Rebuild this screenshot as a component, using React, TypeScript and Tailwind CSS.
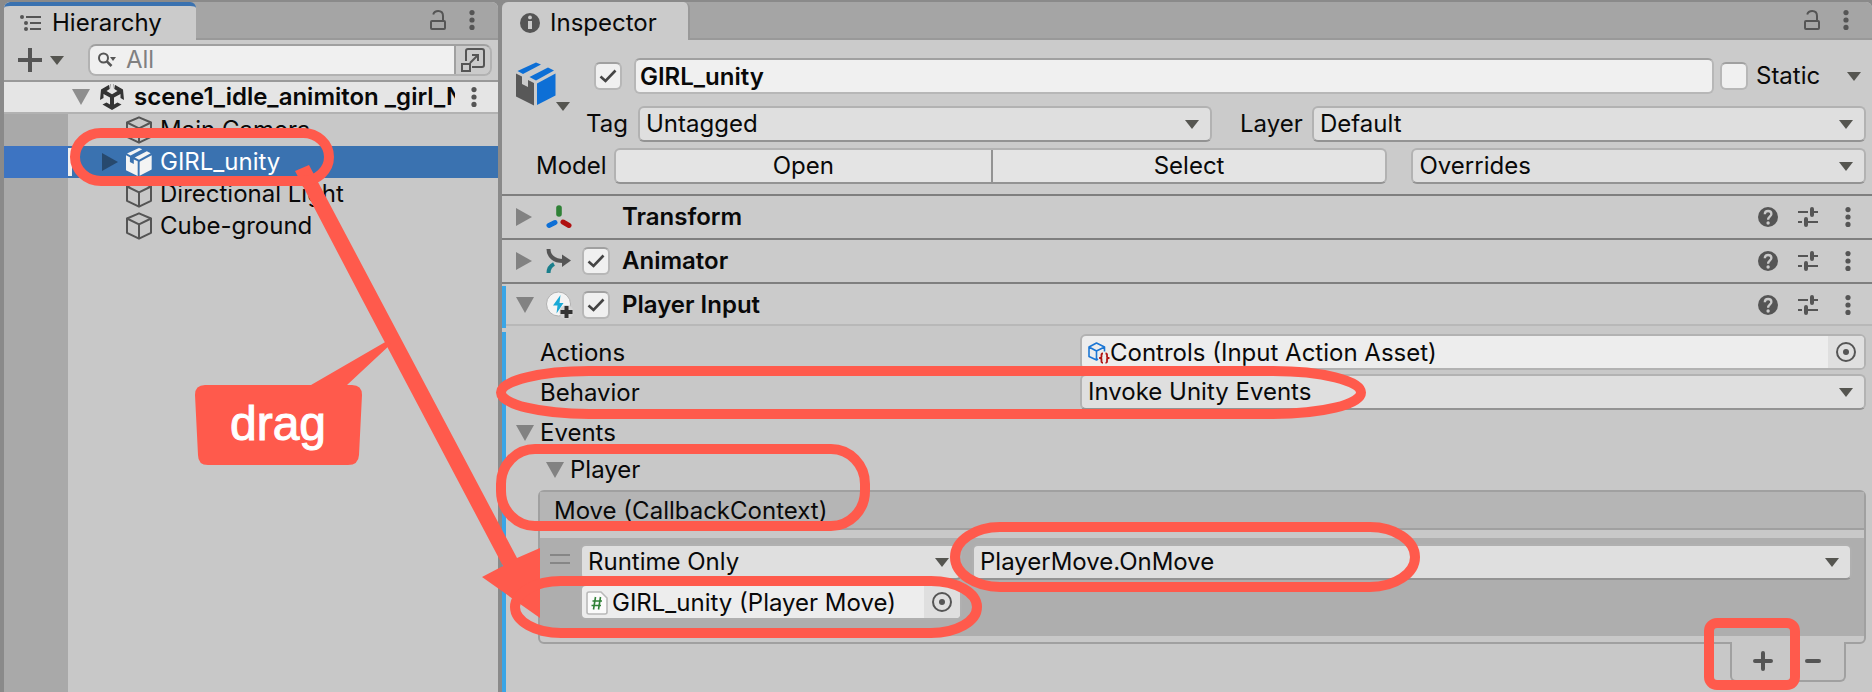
import { useState, type ReactNode } from "react";

/* ---------- small glyphs ---------- */

function DownArrow({ className = "" }: { className?: string }) {
  return (
    <svg width="14" height="9" viewBox="0 0 14 9" aria-hidden="true" className={`shrink-0 ${className}`}>
      <path d="M0 0H14L7 9Z" fill="#555550" />
    </svg>
  );
}

function Foldout({ open, fill = "#828282" }: { open: boolean; fill?: string }) {
  return (
    <svg width="18" height="18" viewBox="0 0 18 18" aria-hidden="true" className="shrink-0">
      <path d={open ? "M0 1H18L9 17Z" : "M0 0L16 9L0 18Z"} fill={fill} />
    </svg>
  );
}

function Dots() {
  return (
    <svg width="6" height="20" viewBox="0 0 6 20" aria-hidden="true" fill="#555555">
      <circle cx="3" cy="2.6" r="2.6" />
      <circle cx="3" cy="10" r="2.6" />
      <circle cx="3" cy="17.4" r="2.6" />
    </svg>
  );
}

function LockIcon() {
  return (
    <svg width="18" height="22" viewBox="0 0 18 22" aria-hidden="true" fill="none" stroke="#555555" strokeWidth="2">
      <rect x="2" y="12" width="14" height="8" rx="1" />
      <path d="M4.2 5.5C5 3 7 2 9.2 2C12.2 2 14 4 14 7V12" />
    </svg>
  );
}

function HierarchyIcon() {
  return (
    <svg width="22" height="18" viewBox="0 0 22 18" aria-hidden="true" stroke="#555555" strokeWidth="2" fill="#555555">
      <path d="M6 3H21M10 9H21M10 15H21" />
      <g stroke="none">
        <circle cx="2" cy="3" r="2" />
        <circle cx="6" cy="9" r="2" />
        <circle cx="6" cy="15" r="2" />
      </g>
    </svg>
  );
}

function InfoIcon() {
  return (
    <svg width="20" height="20" viewBox="0 0 20 20" aria-hidden="true">
      <circle cx="10" cy="10" r="10" fill="#555555" />
      <circle cx="10" cy="4.4" r="1.9" fill="#cbcbcb" />
      <path d="M8 8H12V16H8Z" fill="#cbcbcb" />
    </svg>
  );
}

function HelpIcon() {
  return (
    <svg width="20" height="20" viewBox="0 0 20 20" aria-hidden="true">
      <circle cx="10" cy="10" r="10" fill="#555555" />
      <path d="M6.8 7.3C6.8 5.2 8.1 4 10.1 4C12.1 4 13.4 5.2 13.4 6.9C13.4 9.3 10.1 9.4 10.1 12.8" fill="none" stroke="#cbcbcb" strokeWidth="2.3" />
      <circle cx="10.1" cy="16" r="1.7" fill="#cbcbcb" />
    </svg>
  );
}

function SlidersIcon() {
  return (
    <svg width="20" height="20" viewBox="0 0 20 20" aria-hidden="true" stroke="#555555" fill="none">
      <path d="M0 5H10M14 5H20M0 15H4M9 15H20" strokeWidth="2" />
      <path d="M14 2V8M8 12V18" strokeWidth="4" strokeLinecap="round" />
    </svg>
  );
}

function SearchIcon() {
  return (
    <svg width="18" height="16" viewBox="0 0 18 16" aria-hidden="true">
      <circle cx="5.5" cy="6" r="4.5" fill="none" stroke="#555555" strokeWidth="2" />
      <path d="M8.8 9.3L13.5 14" stroke="#555555" strokeWidth="2.6" />
      <path d="M12 5H18L15 9Z" fill="#555555" />
    </svg>
  );
}

function PopOutIcon() {
  return (
    <svg width="24" height="24" viewBox="0 0 24 24" aria-hidden="true" fill="none" stroke="#555555" strokeWidth="2">
      <path d="M5 13V3C5 1.8 5.8 1 7 1H21C22.2 1 23 1.8 23 3V17C23 18.2 22.2 19 21 19H11" />
      <rect x="1" y="16" width="8" height="7" />
      <path d="M9 15L17 7M11 7H17V13" />
    </svg>
  );
}

function CubeOutline() {
  return (
    <svg width="26" height="28" viewBox="0 0 26 28" aria-hidden="true" fill="none" stroke="#555555" strokeWidth="2" strokeLinejoin="round">
      <path d="M13 1.3L25 6.5V20.8L13 26.7L1 20.8V6.5Z" />
      <path d="M1 6.5L13 12.3L25 6.5M13 12.3V26.7" />
    </svg>
  );
}

function PrefabIcon({ front, side, size }: { front: string; side: string; size: "small" | "large" }) {
  return (
    <svg width={size === "large" ? 40 : 26} height={size === "large" ? 44 : 28} viewBox="0 0 40 43" aria-hidden="true">
      <path d="M20 0L25 2L7 11.5L1.5 8.5Z" fill={side} />
      <path d="M32 5L38 8L20 18L13.5 14.5Z" fill={side} />
      <path d="M0 11L6 14V21.5L12 24.5V17.5L18 20.5V43L0 34Z" fill={front} />
      <path d="M21 21L39.5 11V33L21 42.5Z" fill={side} />
    </svg>
  );
}

function UnityLogo() {
  return (
    <svg width="24" height="26" viewBox="0 0 24 26" aria-hidden="true" fill="#333333">
      <path d="M10.500 0V4.500L6.500 7L12 10.200L17.500 7L13.500 4.500V0L23 5.500L24 16L20.500 14V10L14 13.500V20.500L17.500 18.500L21.500 20.500L12 26L2.500 20.500L6.500 18.500L10 20.500V13.500L3.500 10V14L0 16L1 5.500Z" />
      <path d="M9.500 0L10.500 6M14.500 0L13.500 6" stroke="#e5e5e5" strokeWidth="1.200" />
    </svg>
  );
}

function TransformIcon() {
  return (
    <svg width="26" height="24" viewBox="0 0 26 24" aria-hidden="true" strokeLinecap="round">
      <path d="M13 3V9" stroke="#2f8136" strokeWidth="5.6" />
      <path d="M9 17.5L3 20.5" stroke="#0d6fd6" strokeWidth="5" />
      <path d="M17 17L23 20.5" stroke="#b01010" strokeWidth="5" />
    </svg>
  );
}

function AnimatorIcon() {
  return (
    <svg width="26" height="26" viewBox="0 0 26 26" aria-hidden="true" fill="none" strokeWidth="4">
      <path d="M2.5 1C2.5 8 8 13 17 13" stroke="#555555" />
      <path d="M16 6.5L25 12.5L16 19Z" fill="#555555" />
      <path d="M2.5 25C2.5 21 4 18 8 16" stroke="#1a7f8c" />
    </svg>
  );
}

function PlayerInputIcon() {
  return (
    <svg width="28" height="28" viewBox="0 0 28 28" aria-hidden="true">
      <circle cx="12.5" cy="13" r="12" fill="#f4f4f4" stroke="#b0b0b0" strokeWidth="1" />
      <path d="M14.5 4L7 14.5H11.5L10.5 22.5L17.5 12H13.5Z" fill="#19a9d6" />
      <circle cx="20.5" cy="21" r="7" fill="#d4d4d4" />
      <path d="M20.5 15V27M14.5 21H26.5" stroke="#333333" strokeWidth="4" />
    </svg>
  );
}

function ActionAssetIcon() {
  return (
    <svg width="22" height="22" viewBox="0 0 22 22" aria-hidden="true" fill="none" strokeLinejoin="round">
      <path d="M10 17L8.5 18L1 14.5V5L8.5 1L16.5 5V9.5M1 5L8.5 9L16.5 5M8.5 9V18" stroke="#1b76d4" strokeWidth="1.6" />
      <path d="M15 11.5C13 11.5 13.5 13 13.5 14.5C13.5 15.5 13 16 11.8 16C13 16 13.5 16.5 13.5 17.5C13.5 19.5 13 20.8 15 20.8M17.5 11.5C19.5 11.5 19 13 19 14.5C19 15.5 19.5 16 20.8 16C19.5 16 19 16.5 19 17.5C19 19.5 19.5 20.8 17.5 20.8" stroke="#b01515" strokeWidth="1.8" />
    </svg>
  );
}

function ScriptIcon() {
  return (
    <svg width="22" height="24" viewBox="0 0 22 24" aria-hidden="true">
      <path d="M3 1H15L21 7V21C21 22.2 20.2 23 19 23H3C1.8 23 1 22.2 1 21V3C1 1.8 1.8 1 3 1Z" fill="#fbfbfb" stroke="#b9b9b9" strokeWidth="1.6" />
      <path d="M9.5 6L7.5 18.5M14.5 6L12.5 18.5M6.5 10H16M5.5 14.5H15" stroke="#2f8136" strokeWidth="1.6" fill="none" />
    </svg>
  );
}

function PickerIcon() {
  return (
    <svg width="20" height="20" viewBox="0 0 20 20" aria-hidden="true">
      <circle cx="10" cy="10" r="9" fill="none" stroke="#555555" strokeWidth="2" />
      <circle cx="10" cy="10" r="3" fill="#555555" />
    </svg>
  );
}

/* ---------- controls ---------- */

function Dropdown({ label, value, inset = false, className = "" }: { label: string; value: string; inset?: boolean; className?: string }) {
  return (
    <span className={`grid min-w-0 grid-cols-1 items-center ${className}`}>
      <select
        aria-label={label}
        className={`col-start-1 row-start-1 h-9 w-full appearance-none rounded-md border-2 bg-[#dfdfdf] pl-1.5 pr-10 ${
          inset ? "border-[#b0b0b0] border-b-[#939393]" : "border-[#b2b2b2] border-b-[#939393]"
        }`}
      >
        <option>{value}</option>
      </select>
      <DownArrow className="pointer-events-none col-start-1 row-start-1 mr-[13px] justify-self-end" />
    </span>
  );
}

function Check({ label, initial, id }: { label: string; initial: boolean; id?: string }) {
  const [on, setOn] = useState(initial);
  return (
    <span className="grid size-7 shrink-0 place-items-center">
      <input
        id={id}
        type="checkbox"
        aria-label={label}
        checked={on}
        onChange={() => setOn(!on)}
        className="col-start-1 row-start-1 size-7 appearance-none rounded-md border-2 border-[#b7b7b7] border-t-[#a0a0a0] bg-[#f0f0f0]"
      />
      {on && (
        <svg width="18" height="16" viewBox="0 0 18 16" aria-hidden="true" className="pointer-events-none col-start-1 row-start-1">
          <path d="M1.5 8.5L6.5 13L16.5 2.5" fill="none" stroke="#444444" strokeWidth="2.6" />
        </svg>
      )}
    </span>
  );
}

function ObjectField({ icon, text, label, inset = false, className = "" }: { icon: ReactNode; text: string; label: string; inset?: boolean; className?: string }) {
  return (
    <div className={`flex h-9 min-w-0 overflow-hidden rounded-md border-2 bg-[#ededed] ${inset ? "border-[#b0b0b0]" : "border-[#b2b2b2]"} ${className}`}>
      <span className="flex min-w-0 flex-1 items-center overflow-hidden whitespace-nowrap pt-0.5">
        {icon}
        {text}
      </span>
      <button type="button" aria-label={label} className="grid w-9 shrink-0 place-items-center bg-[#dfdfdf]">
        <PickerIcon />
      </button>
    </div>
  );
}

function PanelTools({ name }: { name: string }) {
  return (
    <div className="flex flex-1 items-center justify-end border-b-2 border-[#999999] pr-[23px]">
      <button type="button" aria-label={`Lock ${name}`} className="mr-[22px]">
        <LockIcon />
      </button>
      <button type="button" aria-label={`${name} menu`}>
        <Dots />
      </button>
    </div>
  );
}

/* ---------- hierarchy ---------- */

const objects = [
  { name: "Main Camera", selected: false },
  { name: "GIRL_unity", selected: true },
  { name: "Directional Light", selected: false },
  { name: "Cube-ground", selected: false },
];

function Hierarchy() {
  return (
    <section aria-label="Hierarchy" className="flex w-[494px] shrink-0 flex-col overflow-hidden rounded-t-md bg-[#c8c8c8]">
      <header className="flex h-[38px] bg-[#a5a5a5]">
        <h2 className="flex w-48 items-center gap-2.5 rounded-t-md border-t-4 border-[#3a72b0] bg-[#cbcbcb] pl-4">
          <HierarchyIcon />
          Hierarchy
        </h2>
        <PanelTools name="Hierarchy" />
      </header>

      <div className="flex h-[42px] items-center border-b-2 border-[#999999] bg-[#cbcbcb] pl-3.5 pr-1.5">
        <button type="button" aria-label="Create" className="flex items-center gap-2">
          <svg width="24" height="24" viewBox="0 0 24 24" aria-hidden="true">
            <path d="M12 0V24M0 12H24" stroke="#555555" strokeWidth="4" />
          </svg>
          <DownArrow />
        </button>
        <div className="ml-6 flex h-8 flex-1 overflow-hidden rounded-lg border-2 border-[#b2b2b2] border-t-[#a0a0a0]">
          <label className="flex min-w-0 flex-1 items-center gap-2.5 bg-[#f0f0f0] pl-2">
            <SearchIcon />
            <input type="search" placeholder="All" aria-label="Search" className="min-w-0 flex-1 bg-transparent placeholder:text-[#808080]" />
          </label>
          <button type="button" aria-label="Open search window" className="grid w-9 place-items-center border-l-2 border-[#a0a0a0] bg-[#cbcbcb]">
            <PopOutIcon />
          </button>
        </div>
      </div>

      <div className="flex h-8 items-center border-b-2 border-[#b2b2b2] bg-[#e5e5e5] pl-[68px] pr-[21px] font-semibold">
        <Foldout open fill="#8e8e8e" />
        <span className="ml-2.5 shrink-0">
          <UnityLogo />
        </span>
        <span className="ml-2.5 min-w-0 flex-1 overflow-hidden whitespace-nowrap">scene1_idle_animiton _girl_N</span>
        <button type="button" aria-label="Scene menu" className="ml-4">
          <Dots />
        </button>
      </div>

      <ul>
        {objects.map((o) => (
          <li key={o.name} className={`flex h-8 items-center ${o.selected ? "bg-[#3a72b0] text-white" : ""}`}>
            <span className={`h-full w-16 ${o.selected ? "bg-[#3d74c2]" : "bg-[#a9a9a9]"}`} />
            <span className={`h-7 w-1 ${o.selected ? "bg-[#f0f0f0]" : ""}`} />
            <span className="flex w-[54px] pl-[30px]">{o.selected && <Foldout open={false} fill="#27496e" />}</span>
            {o.selected ? <PrefabIcon front="#f4f4f4" side="#f4f4f4" size="small" /> : <CubeOutline />}
            <span className="ml-2">{o.name}</span>
          </li>
        ))}
      </ul>
      <div className="w-16 flex-1 bg-[#a9a9a9]" />
    </section>
  );
}

/* ---------- inspector ---------- */

function ComponentHeader({ title, open, icon, toggle, className }: { title: string; open: boolean; icon: ReactNode; toggle: boolean; className: string }) {
  return (
    <div className={`flex items-center border-b-2 bg-[#cbcbcb] pr-[21px] ${className}`}>
      <Foldout open={open} />
      <span className="ml-3 flex w-9 shrink-0">{icon}</span>
      <span className="w-10 shrink-0">{toggle && <Check label={`${title} enabled`} initial />}</span>
      <h3 className="flex-1 font-semibold">{title}</h3>
      <div className="flex items-center gap-5">
        <button type="button" aria-label={`${title} help`}>
          <HelpIcon />
        </button>
        <button type="button" aria-label={`${title} presets`}>
          <SlidersIcon />
        </button>
        <button type="button" aria-label={`${title} menu`} className="ml-[7px]">
          <Dots />
        </button>
      </div>
    </div>
  );
}

function ObjectHeader() {
  return (
    <div className="border-b-2 border-[#7f7f7f] bg-[#cbcbcb] pb-2.5 pr-1.5 pt-[18px]">
      <div className="flex">
        <button type="button" aria-label="Object icon" className="ml-3.5 mt-1 flex w-[54px] shrink-0 flex-col items-start">
          <PrefabIcon front="#585858" side="#0d6fd6" size="large" />
          <DownArrow className="-mt-1 self-end" />
        </button>
        <div className="ml-4 flex min-w-0 flex-1 flex-col gap-3">
          <div className="flex items-center pl-2">
            <Check label="Active" initial />
            <input
              aria-label="Name"
              defaultValue="GIRL_unity"
              className="ml-3 h-9 min-w-0 flex-1 rounded-md border-2 border-[#b7b7b7] border-t-[#a0a0a0] bg-[#f0f0f0] px-1 font-semibold"
            />
            <span className="ml-1.5 flex">
              <Check label="Static" initial={false} id="static" />
            </span>
            <label htmlFor="static" className="ml-2 w-[91px]">
              Static
            </label>
            <button type="button" aria-label="Static options" className="mr-[5px]">
              <DownArrow />
            </button>
          </div>
          <div className="flex items-center">
            <span className="w-[52px]">Tag</span>
            <Dropdown label="Tag" value="Untagged" className="flex-[574]" />
            <span className="ml-7 w-[72px]">Layer</span>
            <Dropdown label="Layer" value="Default" className="flex-[554]" />
          </div>
        </div>
      </div>
      <div className="mt-1.5 flex items-center pl-[34px]">
        <span className="w-[78px]">Model</span>
        <div className="mr-6 grid h-9 flex-[772] grid-cols-[376fr_392fr] overflow-hidden rounded-md border-2 border-[#b2b2b2] border-b-[#939393] bg-[#e4e4e4]">
          <button type="button" className="border-r-2 border-[#939393]">
            Open
          </button>
          <button type="button">Select</button>
        </div>
        <Dropdown label="Overrides" value="Overrides" className="flex-[456]" />
      </div>
    </div>
  );
}

function EventList() {
  return (
    <div className="ml-8 mr-1.5 mt-0.5">
      <div className="rounded-md border-2 border-[#a0a0a0] pb-1.5">
        <h4 className="flex h-[38px] items-center border-b-2 border-[#a0a0a0] bg-[#b5b5b5] pl-3.5 pt-0.5">Move (CallbackContext)</h4>
        <div className="mt-2 flex h-[98px] gap-2.5 bg-[#aeaeae] pl-2.5 pr-3 pt-1.5">
          <svg width="20" height="10" viewBox="0 0 20 10" aria-hidden="true" className="mt-2.5 shrink-0">
            <path d="M0 1H20M0 9H20" stroke="#868686" strokeWidth="2" />
          </svg>
          <div className="flex flex-[382] flex-col gap-1">
            <Dropdown label="Call state" value="Runtime Only" inset />
            <ObjectField label="Pick target" inset text="GIRL_unity (Player Move)" icon={<span className="mx-1 shrink-0"><ScriptIcon /></span>} />
          </div>
          <Dropdown label="Function" value="PlayerMove.OnMove" inset className="flex-[880] self-start" />
        </div>
      </div>
      <div className="-mt-0.5 mr-5 ml-auto flex h-10 w-[116px] items-center rounded-b-md border-2 border-t-0 border-[#a0a0a0] bg-[#c8c8c8]">
        <button type="button" aria-label="Add" className="grid h-full w-[62px] place-items-center">
          <svg width="20" height="20" viewBox="0 0 20 20" aria-hidden="true">
            <path d="M10 2V18M2 10H18" stroke="#555555" strokeWidth="4" strokeLinecap="round" />
          </svg>
        </button>
        <button type="button" aria-label="Remove" className="grid h-full flex-1 place-items-center pr-3">
          <svg width="16" height="4" viewBox="0 0 16 4" aria-hidden="true">
            <path d="M2 2H14" stroke="#555555" strokeWidth="4" strokeLinecap="round" />
          </svg>
        </button>
      </div>
    </div>
  );
}

function Inspector() {
  return (
    <section aria-label="Inspector" className="flex min-w-0 flex-1 flex-col overflow-hidden rounded-t-md bg-[#c8c8c8]">
      <header className="flex h-[38px] bg-[#a5a5a5]">
        <h2 className="flex w-[188px] items-center gap-2.5 rounded-t-md border-r-2 border-[#999999] bg-[#cbcbcb] pl-[18px] pt-1">
          <InfoIcon />
          Inspector
        </h2>
        <PanelTools name="Inspector" />
      </header>
      <ObjectHeader />
      <ComponentHeader title="Transform" open={false} toggle={false} icon={<TransformIcon />} className="h-11 border-[#7f7f7f] pl-3.5" />
      <ComponentHeader title="Animator" open={false} toggle icon={<AnimatorIcon />} className="h-11 border-[#7f7f7f] pl-3.5" />
      <div className="flex flex-1">
        <div className="flex w-1 flex-col gap-1 pt-0.5">
          <span className="h-[42px] bg-[#3aa5e6]" />
          <span className="flex-1 bg-[#3aa5e6]" />
        </div>
        <div className="min-w-0 flex-1">
          <ComponentHeader title="Player Input" open toggle icon={<PlayerInputIcon />} className="h-[42px] border-[#b8b8b8] pl-2.5 pt-0.5" />
          <div className="grid grid-cols-[540fr_786fr] items-center gap-y-1 pl-[34px] pr-1.5 pt-2">
            <span className="pt-0.5">Actions</span>
            <ObjectField label="Pick actions" text="Controls (Input Action Asset)" icon={<span className="ml-1.5 shrink-0"><ActionAssetIcon /></span>} />
            <span className="pt-0.5">Behavior</span>
            <Dropdown label="Behavior" value="Invoke Unity Events" />
          </div>
          <div className="mt-1 flex h-[38px] items-center gap-1.5 pl-2.5">
            <Foldout open />
            Events
          </div>
          <div className="flex h-9 items-center gap-1.5 pl-10">
            <Foldout open />
            Player
          </div>
          <EventList />
        </div>
      </div>
    </section>
  );
}

/* ---------- red markup drawn over the editor ---------- */

function Markup() {
  return (
    <svg width="1872" height="692" viewBox="0 0 1872 692" className="pointer-events-none absolute left-0 top-0" role="img" aria-label="Drag GIRL_unity to the event target">
      <g fill="#ff5a4c">
        <path d="M295 171L309 165L354 250L517 558L540 548V618L482 577L503 566L362.5 300Z" />
        <path d="M205 385H311L387 341L391 344L347 385H352Q362 385 362 395L359 455Q358.5 465 348 465H208Q198 465 198 455L195 395Q195 385 205 385Z" />
      </g>
      <g fill="none" stroke="#ff5a4c" strokeWidth="10">
        <rect x="75" y="133" width="254" height="48" rx="26" ry="24" />
        <rect x="501" y="371" width="860" height="43" rx="88" ry="21.5" />
        <rect x="501" y="449" width="364" height="77" rx="34" ry="35" />
        <rect x="515" y="581" width="462" height="52" rx="46" ry="26" />
        <rect x="955" y="527" width="460" height="60" rx="45" ry="30" />
        <rect x="1709" y="623" width="86" height="62" rx="8" />
      </g>
      <text x="278" y="440" textAnchor="middle" fill="#ffffff" stroke="#ffffff" strokeWidth="1" className="font-['Liberation_Sans',sans-serif] text-5xl">
        drag
      </text>
    </svg>
  );
}

export default function App() {
  return (
    <main className="relative flex min-h-screen gap-1 overflow-hidden bg-[#8a8a8a] pl-1 pt-0.5 font-['Inter',sans-serif] text-2xl leading-7 text-[#090909]">
      <Hierarchy />
      <Inspector />
      <Markup />
    </main>
  );
}
